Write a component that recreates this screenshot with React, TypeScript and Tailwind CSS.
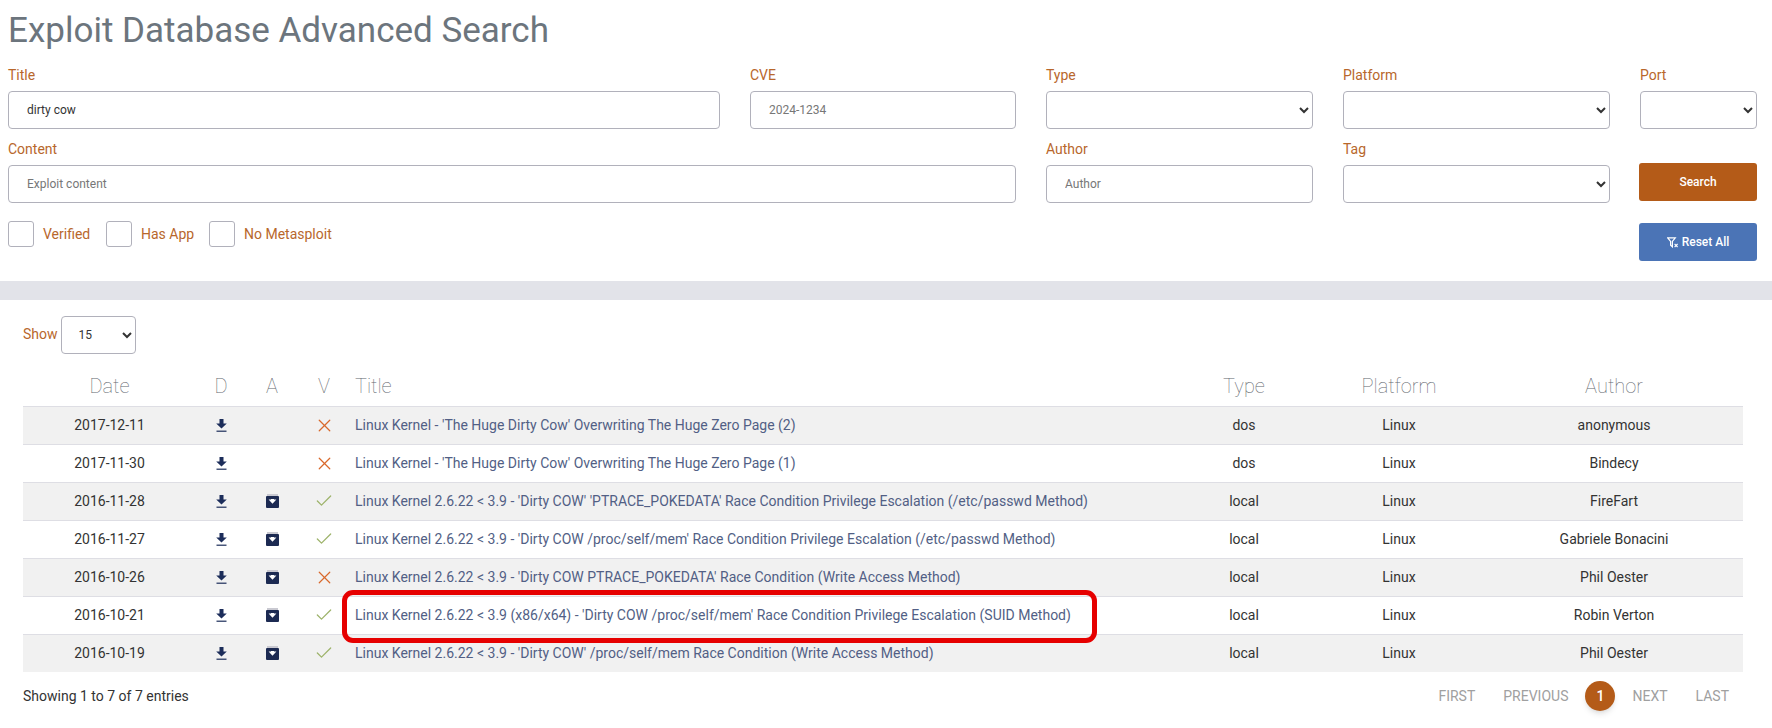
import { Check, X } from 'lucide-react'

type Row = {
  date: string
  app: boolean
  verified: boolean
  title: string
  type: string
  author: string
}

const rows: Row[] = [
  { date: '2017-12-11', app: false, verified: false, title: "Linux Kernel - 'The Huge Dirty Cow' Overwriting The Huge Zero Page (2)", type: 'dos', author: 'anonymous' },
  { date: '2017-11-30', app: false, verified: false, title: "Linux Kernel - 'The Huge Dirty Cow' Overwriting The Huge Zero Page (1)", type: 'dos', author: 'Bindecy' },
  { date: '2016-11-28', app: true, verified: true, title: "Linux Kernel 2.6.22 < 3.9 - 'Dirty COW' 'PTRACE_POKEDATA' Race Condition Privilege Escalation (/etc/passwd Method)", type: 'local', author: 'FireFart' },
  { date: '2016-11-27', app: true, verified: true, title: "Linux Kernel 2.6.22 < 3.9 - 'Dirty COW /proc/self/mem' Race Condition Privilege Escalation (/etc/passwd Method)", type: 'local', author: 'Gabriele Bonacini' },
  { date: '2016-10-26', app: true, verified: false, title: "Linux Kernel 2.6.22 < 3.9 - 'Dirty COW PTRACE_POKEDATA' Race Condition (Write Access Method)", type: 'local', author: 'Phil Oester' },
  { date: '2016-10-21', app: true, verified: true, title: "Linux Kernel 2.6.22 < 3.9 (x86/x64) - 'Dirty COW /proc/self/mem' Race Condition Privilege Escalation (SUID Method)", type: 'local', author: 'Robin Verton' },
  { date: '2016-10-19', app: true, verified: true, title: "Linux Kernel 2.6.22 < 3.9 - 'Dirty COW' /proc/self/mem Race Condition (Write Access Method)", type: 'local', author: 'Phil Oester' },
]

function DownloadIcon() {
  return (
    <svg width="11" height="13" viewBox="0 0 11 13" className="mx-auto text-[#1c2d5a]" fill="currentColor">
      <path d="M3.5 0h4v4.6h3.3L5.5 9.6 .2 4.6h3.3z" />
      <rect x="0.5" y="11.6" width="10" height="1.2" />
    </svg>
  )
}

function ArchiveIcon() {
  return (
    <svg width="13" height="14" viewBox="0 0 13 14" className="mx-auto">
      <rect x="1" y="0" width="11" height="2" fill="#c9c9d1" />
      <rect x="0" y="2" width="13" height="12" rx="1" fill="#1c2a52" />
      <path d="M2.6 5.6h2.4v-.6h3v.6h2.4L6.5 9.8z" fill="#fff" />
    </svg>
  )
}

function FilterClearIcon() {
  return (
    <svg width="12" height="11" viewBox="0 0 12 11" fill="none" stroke="currentColor">
      <path d="M.7 .8h7.6L5.4 4.4v5.4L3.6 8.2V4.4z" strokeWidth="1.2" />
      <path d="M7.6 7l3 3M10.6 7l-3 3" strokeWidth="1.1" />
    </svg>
  )
}

function Field({ label, className, children }: { label: string; className: string; children: React.ReactNode }) {
  return (
    <div className={className}>
      <label className="block h-[20px] text-[14px] leading-[20px] text-[#b8672c]">{label}</label>
      <div className="mt-[6px]">{children}</div>
    </div>
  )
}

const inputCls = 'block h-[38px] w-full rounded-[4px] border border-[#b1b1bb] bg-white pl-[18px] pr-2 text-[12px] text-[#333] outline-none placeholder:text-[#777]'
const selectCls = 'block h-[38px] w-full rounded-[4px] border border-[#b1b1bb] bg-white text-[12px] text-[#333]'

function Checkbox({ label, className }: { label: string; className: string }) {
  return (
    <div className={`flex items-center ${className}`}>
      <span className="block h-[26px] w-[26px] rounded-[3px] border border-[#b1b1bb] bg-white" />
      <span className="ml-[9px] text-[14px] text-[#b8672c]">{label}</span>
    </div>
  )
}

export default function App() {
  return (
    <div className="h-[728px] w-[1772px] overflow-hidden bg-white font-['Roboto',sans-serif]">
      <div className="h-[281px] pl-[8px] pr-[15px]">
        <h1 className="h-[65px] pt-[9px] text-[35px] leading-[44px] text-[#6c757d]">Exploit Database Advanced Search</h1>
        <div className="flex gap-[30px]">
          <Field label="Title" className="w-[712px]"><input className={inputCls} defaultValue="dirty cow" /></Field>
          <Field label="CVE" className="w-[266px]"><input className={inputCls} placeholder="2024-1234" /></Field>
          <Field label="Type" className="w-[267px]"><select className={selectCls} /></Field>
          <Field label="Platform" className="w-[267px]"><select className={selectCls} /></Field>
          <Field label="Port" className="w-[117px]"><select className={selectCls} /></Field>
        </div>
        <div className="mt-[10px] flex gap-[30px]">
          <Field label="Content" className="w-[1008px]"><input className={inputCls} placeholder="Exploit content" /></Field>
          <Field label="Author" className="w-[267px]"><input className={inputCls} placeholder="Author" /></Field>
          <Field label="Tag" className="w-[267px]"><select className={selectCls} /></Field>
          <button className="ml-[-1px] mt-[24px] h-[38px] w-[118px] rounded-[3px] bg-[#b45b18] text-[12px] font-medium text-white">Search</button>
        </div>
        <div className="flex items-start">
          <div className="mt-[18px] flex flex-1 items-start">
            <Checkbox label="Verified" className="w-[98px]" />
            <Checkbox label="Has App" className="w-[103px]" />
            <Checkbox label="No Metasploit" className="" />
          </div>
          <button className="mt-[20px] flex h-[38px] w-[118px] items-center justify-center gap-[3px] rounded-[3px] bg-[#4b74b6] text-[12px] font-medium text-white">
            <FilterClearIcon />
            Reset All
          </button>
        </div>
      </div>
      <div className="h-[19px] bg-[#e2e3e9]" />
      <div className="pl-[23px] pr-[29px]">
        <div className="mt-[16px] flex h-[37px] items-center">
          <span className="text-[14px] text-[#b8672c]">Show</span>
          <select defaultValue="15" className="ml-[3px] h-[38px] w-[75px] rounded-[4px] border border-[#b1b1bb] bg-white pl-[13px] text-[12px] text-[#333]">
            <option value="15">15</option>
          </select>
        </div>
        <div className="relative mt-[15px]">
          <table className="w-[1720px] table-fixed border-collapse text-[14px]">
            <colgroup>
              <col className="w-[173px]" />
              <col className="w-[50px]" />
              <col className="w-[52px]" />
              <col className="w-[52px]" />
              <col className="w-[825px]" />
              <col className="w-[138px]" />
              <col className="w-[172px]" />
              <col className="w-[258px]" />
            </colgroup>
            <thead>
              <tr className="h-[38px] text-[20px] text-[#5f676e]">
                <th className="pb-[2px] font-thin">Date</th>
                <th className="pb-[2px] font-thin">D</th>
                <th className="pb-[2px] font-thin">A</th>
                <th className="pb-[2px] font-thin">V</th>
                <th className="pb-[2px] pl-[5px] text-left font-thin">Title</th>
                <th className="pb-[2px] font-thin">Type</th>
                <th className="pb-[2px] font-thin">Platform</th>
                <th className="pb-[2px] font-thin">Author</th>
              </tr>
            </thead>
            <tbody>
              {rows.map((r, i) => (
                <tr key={r.date} className={`h-[38px] border-t border-[#dedee4] text-center text-[#333] ${i % 2 === 0 ? 'bg-[#f1f1f1]' : 'bg-white'}`}>
                  <td>{r.date}</td>
                  <td><DownloadIcon /></td>
                  <td>{r.app && <ArchiveIcon />}</td>
                  <td>
                    {r.verified
                      ? <Check size={20} strokeWidth={1.5} className="mx-auto text-[#9db36a]" />
                      : <X size={21} strokeWidth={1.4} className="mx-auto text-[#d9692b]" />}
                  </td>
                  <td className="pl-[5px] text-left text-[#525f85]">{r.title}</td>
                  <td>{r.type}</td>
                  <td>Linux</td>
                  <td>{r.author}</td>
                </tr>
              ))}
            </tbody>
          </table>
          <div className="absolute left-[319px] top-[222px] h-[53px] w-[755px] rounded-[11px] border-[5px] border-[#e60000]" />
        </div>
        <div className="mt-[6px] flex h-[36px] items-center justify-between">
          <span className="text-[14px] text-[#333]">Showing 1 to 7 of 7 entries</span>
          <div className="flex items-center text-[14px] text-[#a0a0a0]">
            <span>FIRST</span>
            <span className="ml-[28px]">PREVIOUS</span>
            <span className="ml-[17px] flex h-[30px] w-[30px] items-center justify-center rounded-full bg-[#b45b18] font-medium text-white shadow-md">1</span>
            <span className="ml-[17px]">NEXT</span>
            <span className="ml-[28px] mr-[14px]">LAST</span>
          </div>
        </div>
      </div>
    </div>
  )
}
